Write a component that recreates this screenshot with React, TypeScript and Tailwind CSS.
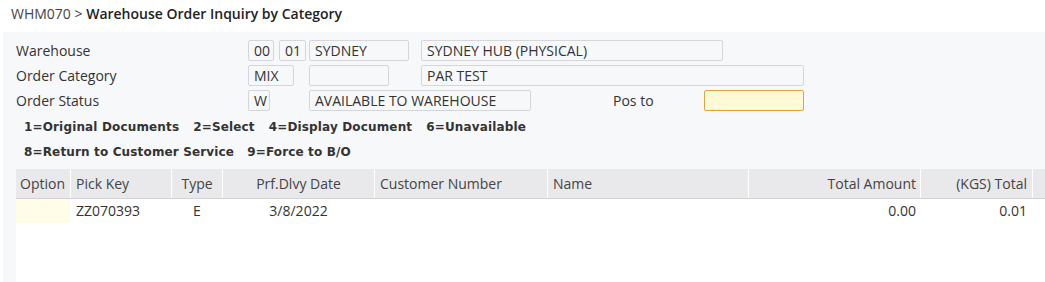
import React from "react";

const Box = ({ w, ml = 0, children, cls = "" }: { w: number; ml?: number; children?: React.ReactNode; cls?: string }) => (
  <div
    className={`h-[21px] rounded-[2px] border border-[#d4d6d9] px-[5px] leading-[19px] text-[14px] whitespace-nowrap overflow-hidden ${cls}`}
    style={{ width: w, marginLeft: ml }}
  >
    {children}
  </div>
);

const cols = [
  { name: "Option", w: 55, align: "left", pl: 4 },
  { name: "Pick Key", w: 101, align: "left", pl: 5 },
  { name: "Type", w: 51, align: "center" },
  { name: "Prf.Dlvy Date", w: 152, align: "center" },
  { name: "Customer Number", w: 173, align: "left", pl: 5 },
  { name: "Name", w: 201, align: "left", pl: 5 },
  { name: "Total Amount", w: 172, align: "right", pr: 4 },
  { name: "(KGS) Total", w: 112, align: "right", pr: 5 },
];

const row = ["", "ZZ070393", "E", "3/8/2022", "", "", "0.00", "0.01"];

export default function App() {
  return (
    <div
      className="w-[1045px] h-[282px] bg-white overflow-hidden flex flex-col text-[#333]"
      style={{ fontFamily: '"Open Sans", "Liberation Sans", sans-serif' }}
    >
      <div className="h-[32px] pl-[11px] pt-[4px] text-[14px] leading-[20px] whitespace-nowrap">
        <span className="text-[#444]">WHM070 &gt; </span>
        <span className="font-semibold text-[#222]">Warehouse Order Inquiry by Category</span>
      </div>
      <div className="ml-[3px] flex-1 bg-[#f7f8fa] flex flex-col">
        <div className="pl-[13px] pt-[8px] flex flex-col gap-[4px] text-[14px]">
          <div className="flex items-center h-[21px]">
            <div className="w-[232px] leading-[21px]">Warehouse</div>
            <Box w={26}>00</Box>
            <Box w={27} ml={5}>01</Box>
            <Box w={100} ml={3}>SYDNEY</Box>
            <Box w={302} ml={12}>SYDNEY HUB (PHYSICAL)</Box>
          </div>
          <div className="flex items-center h-[21px]">
            <div className="w-[232px] leading-[21px]">Order Category</div>
            <Box w={46}>MIX</Box>
            <Box w={80} ml={15}></Box>
            <Box w={383} ml={32}>PAR TEST</Box>
          </div>
          <div className="flex items-center h-[21px]">
            <div className="w-[232px] leading-[21px]">Order Status</div>
            <Box w={22}>W</Box>
            <Box w={222} ml={39}>AVAILABLE TO WAREHOUSE</Box>
            <div className="ml-[82px] w-[91px] leading-[21px]">Pos to</div>
            <Box w={100} cls="!border-[#e3a43c] bg-[#fff9d6]"></Box>
          </div>
        </div>
        <div
          className="mt-[4px] pl-[21px] text-[12px] font-bold tracking-[0.15px] text-[#333] whitespace-nowrap"
          style={{ fontFamily: '"DejaVu Sans", Verdana, sans-serif' }}
        >
          <div className="h-[25px] leading-[25px] flex">
            <span className="mr-[14px]">1=Original Documents</span>
            <span className="mr-[14px]">2=Select</span>
            <span className="mr-[14px]">4=Display Document</span>
            <span>6=Unavailable</span>
          </div>
          <div className="h-[25px] leading-[25px] flex">
            <span className="mr-[13px]">8=Return to Customer Service</span>
            <span>9=Force to B/O</span>
          </div>
        </div>
        <div className="mt-[4px] ml-[13px] flex-1 bg-white flex flex-col text-[14px]">
          <div className="flex h-[30px] bg-[#e9e9eb] border-b border-[#d3d3d6] text-[#444]">
            {cols.map((c, i) => (
              <div
                key={i}
                className={`h-full leading-[29px] border-r border-white whitespace-nowrap ${
                  c.align === "left" ? "text-left" : c.align === "right" ? "text-right" : "text-center"
                }`}
                style={{ width: c.w, paddingLeft: c.pl ?? 0, paddingRight: c.pr ?? 0 }}
              >
                {c.name}
              </div>
            ))}
            <div className="flex-1" />
          </div>
          <div className="flex h-[24px]">
            {cols.map((c, i) => (
              <div
                key={i}
                className={`h-full leading-[24px] whitespace-nowrap ${i === 0 ? "bg-[#fffde8]" : ""} ${
                  c.align === "left" ? "text-left" : c.align === "right" ? "text-right" : "text-center"
                }`}
                style={{ width: c.w - (i === 0 ? 1 : 0), marginRight: i === 0 ? 1 : 0, paddingLeft: c.pl ?? 0, paddingRight: (c.pr ?? 0) + 1 }}
              >
                {row[i]}
              </div>
            ))}
          </div>
        </div>
      </div>
    </div>
  );
}
